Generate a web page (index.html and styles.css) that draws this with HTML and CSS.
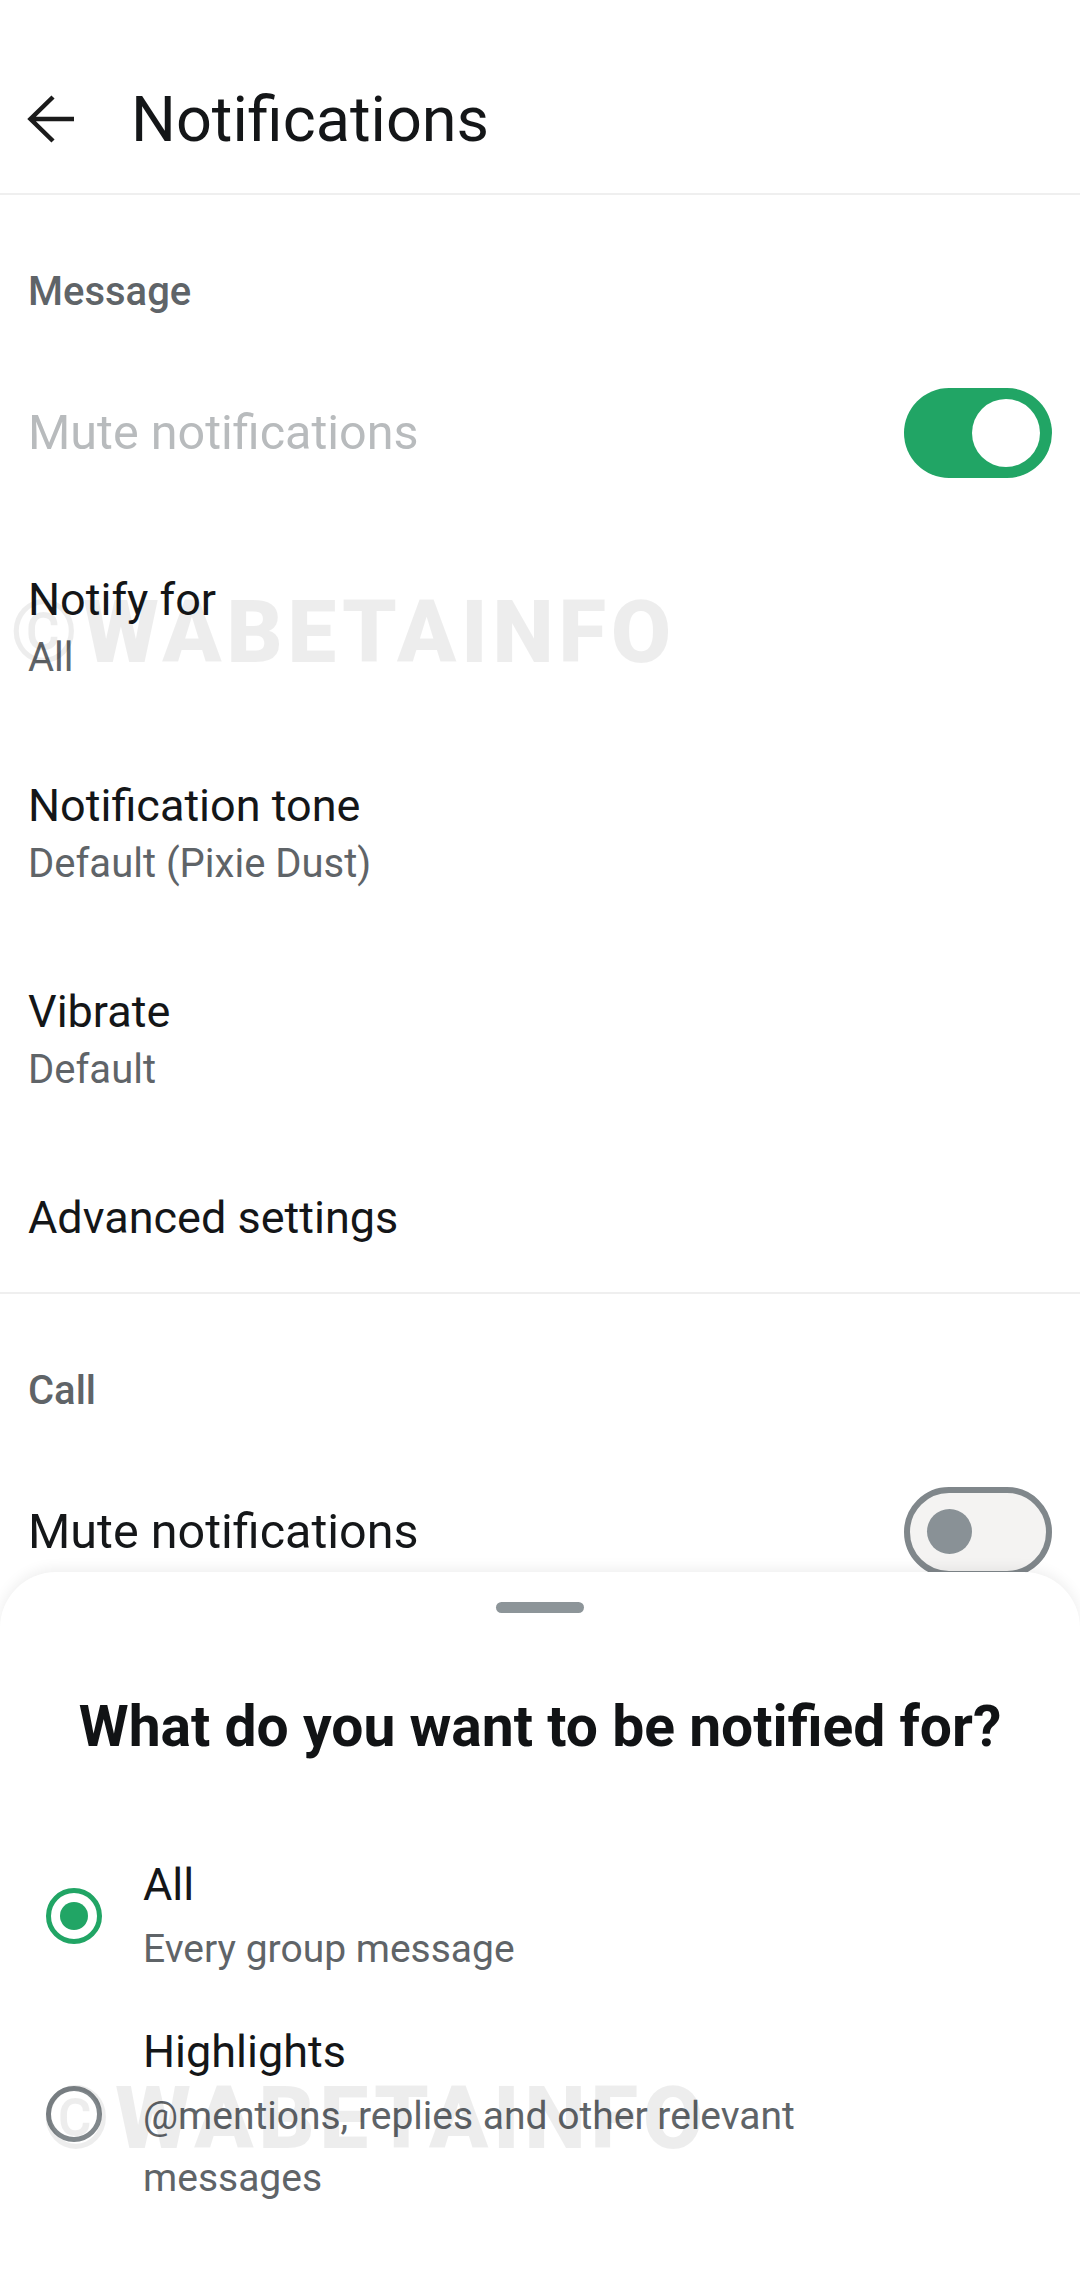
FILE: index.html
```html
<!DOCTYPE html>
<html lang="en">
<head>
<meta charset="utf-8">
<title>Notifications</title>
<link rel="stylesheet" href="styles.css">
</head>
<body>
<div class="screen">
  <header class="appbar">
    <svg class="back" width="50" height="50" viewBox="0 0 50 50" aria-hidden="true">
      <path d="M47 25H4 M26 3 L3.5 25 L26 47" fill="none" stroke="#1b1b1b" stroke-width="4.5" stroke-linejoin="miter"/>
    </svg>
    <h1 class="appbar-title">Notifications</h1>
  </header>

  <section class="group">
    <div class="group-label">Message</div>
    <div class="switch-row">
      <span class="switch-title disabled">Mute notifications</span>
      <span class="switch on"><span class="thumb"></span></span>
    </div>
    <div class="item">
      <div class="item-title">Notify for</div>
      <div class="item-sub">All</div>
    </div>
    <div class="item">
      <div class="item-title">Notification tone</div>
      <div class="item-sub">Default (Pixie Dust)</div>
    </div>
    <div class="item">
      <div class="item-title">Vibrate</div>
      <div class="item-sub">Default</div>
    </div>
    <div class="item single">
      <div class="item-title">Advanced settings</div>
    </div>
  </section>

  <section class="group divided">
    <div class="group-label">Call</div>
    <div class="switch-row">
      <span class="switch-title">Mute notifications</span>
      <span class="switch off"><span class="thumb"></span></span>
    </div>
  </section>

  <div class="watermark wm-top">©WABETAINFO</div>

  <div class="sheet">
    <div class="handle"></div>
    <h2 class="sheet-title">What do you want to be notified for?</h2>
    <div class="options">
      <div class="option">
        <span class="radio checked"><span class="dot"></span></span>
        <div class="option-text">
          <div class="option-title">All</div>
          <div class="option-sub">Every group message</div>
        </div>
      </div>
      <div class="option">
        <span class="radio"></span>
        <div class="option-text">
          <div class="option-title">Highlights</div>
          <div class="option-sub">@mentions, replies and other relevant messages</div>
        </div>
      </div>
    </div>
    <div class="watermark wm-bottom">©WABETAINFO</div>
  </div>
</div>
</body>
</html>
```

FILE: styles.css
```css
* { box-sizing: border-box; }

html, body {
  margin: 0;
  padding: 0;
  background: #ffffff;
}

body {
  font-family: Roboto, "Liberation Sans", Arial, sans-serif;
  color: #111315;
}

.screen {
  position: relative;
  width: 1080px;
  height: 2280px;
  overflow: hidden;
  background: #ffffff;
}

/* App bar */
.appbar {
  height: 195px;
  padding: 45px 0 0 27px;
  display: flex;
  align-items: center;
  border-bottom: 2px solid #efefef;
}
.appbar .back {
  flex: none;
  display: block;
}
.appbar-title {
  margin: 0 0 0 54px;
  font-size: 63px;
  font-weight: 400;
  line-height: 1;
  color: #141618;
}

/* Groups */
.group.divided {
  border-top: 2px solid #efefef;
}
.group-label {
  padding: 69px 28px 20px;
  font-size: 40px;
  font-weight: 500;
  line-height: 56px;
  color: #5f6468;
}

.switch-row {
  height: 185px;
  padding: 0 28px;
  display: flex;
  align-items: center;
  justify-content: space-between;
}
.switch-title {
  font-size: 48.5px;
  line-height: 60px;
  color: #151719;
}
.switch-title.disabled {
  color: #b8bbbd;
}

.switch {
  flex: none;
  width: 148px;
  height: 90px;
  border-radius: 45px;
  display: flex;
  align-items: center;
}
.switch.on {
  background: #21a565;
  justify-content: flex-end;
  padding: 0 12px;
}
.switch.on .thumb {
  width: 68px;
  height: 68px;
  border-radius: 50%;
  background: #ffffff;
}
.switch.off {
  background: #f4f3f2;
  border: 6px solid #80878b;
  padding-left: 17px;
}
.switch.off .thumb {
  width: 45px;
  height: 45px;
  border-radius: 50%;
  background: #899196;
}

.item {
  height: 206px;
  padding: 0 28px;
  display: flex;
  flex-direction: column;
  justify-content: center;
}
.item.single {
  height: 149px;
}
.item-title {
  font-size: 45px;
  line-height: 60px;
  color: #141618;
}
.item-sub {
  font-size: 40px;
  line-height: 56px;
  color: #5f6468;
}

/* Watermark */
.watermark {
  position: absolute;
  font-family: Roboto, "Liberation Sans", sans-serif;
  font-size: 87px;
  font-weight: 900;
  line-height: 1;
  letter-spacing: 5px;
  color: rgba(0, 0, 0, 0.07);
  pointer-events: none;
  white-space: nowrap;
}
.wm-top {
  left: 10px;
  top: 589px;
}
.wm-bottom {
  left: 42px;
  top: 503px;
}

/* Bottom sheet */
.sheet {
  position: absolute;
  left: 0;
  right: 0;
  top: 1572px;
  bottom: 0;
  background: #ffffff;
  border-radius: 56px 56px 0 0;
  box-shadow: 0 -3px 14px rgba(0, 0, 0, 0.07);
}
.handle {
  width: 88px;
  height: 11px;
  margin: 30px auto 0;
  border-radius: 6px;
  background: #8d9599;
}
.sheet-title {
  margin: 79px 0 0;
  font-size: 57px;
  font-weight: 700;
  line-height: 70px;
  text-align: center;
  color: #111315;
}

.options {
  margin-top: 90px;
  display: flex;
  flex-direction: column;
  gap: 39px;
}
.option {
  display: flex;
  align-items: center;
  padding-left: 46px;
  gap: 41px;
}
.radio {
  flex: none;
  width: 56px;
  height: 56px;
  border-radius: 50%;
  border: 5px solid #80878b;
  display: flex;
  align-items: center;
  justify-content: center;
}
.radio.checked {
  border-color: #21a565;
}
.radio .dot {
  width: 28px;
  height: 28px;
  border-radius: 50%;
  background: #21a565;
}
.option-text {
  max-width: 760px;
}
.option-title {
  font-size: 45px;
  line-height: 66px;
  color: #141618;
}
.option-sub {
  font-size: 39px;
  line-height: 62px;
  color: #5f6468;
}
```
